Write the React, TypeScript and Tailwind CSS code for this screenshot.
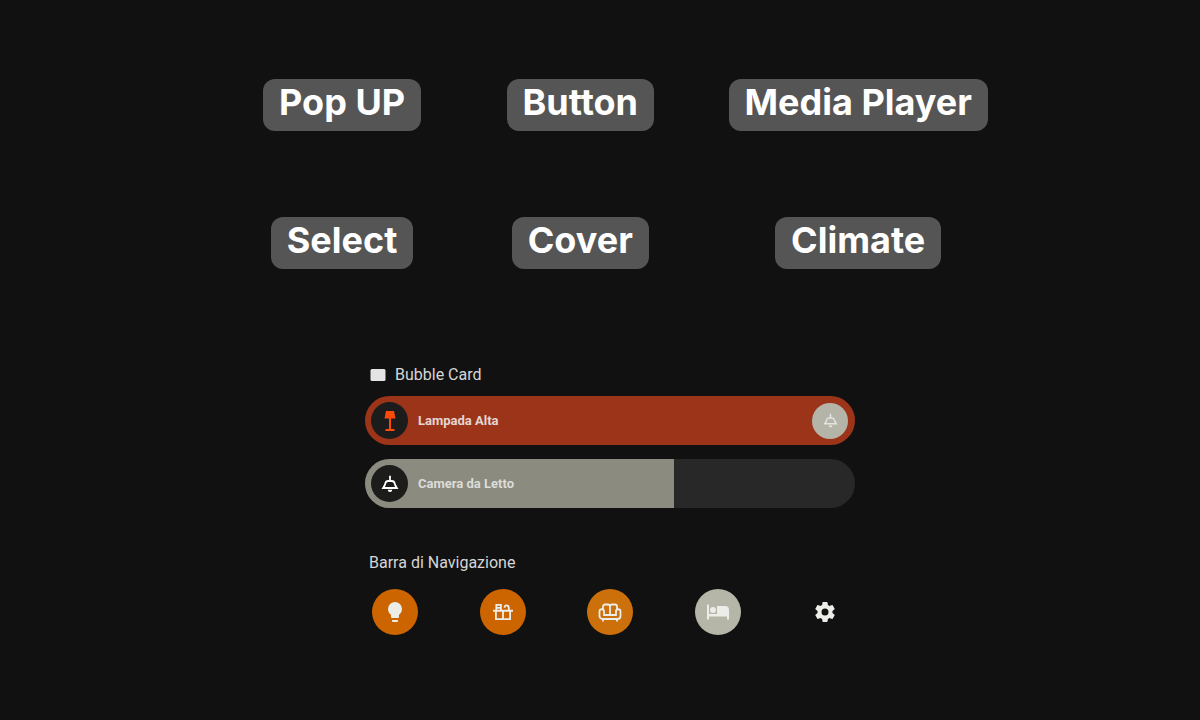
import React from 'react';

const ICONS = {
  card: 'M4 4h16a2 2 0 0 1 2 2v12a2 2 0 0 1-2 2H4a2 2 0 0 1-2-2V6a2 2 0 0 1 2-2z',
  floorLamp: 'M8 2h8l1.500 7.500H13V20h3.500v2h-9v-2H11V9.500H6.500z',
  lightbulb:
    'M12 2a7 7 0 0 0-7 7c0 2.380 1.190 4.470 3 5.740V17a1 1 0 0 0 1 1h6a1 1 0 0 0 1-1v-2.260c1.810-1.270 3-3.360 3-5.740a7 7 0 0 0-7-7M9 21a1 1 0 0 0 1 1h4a1 1 0 0 0 1-1v-1H9z',
  bed: 'M19 6h-8v8H3V4.500H1v15h2v-3h18v3h2V10a4 4 0 0 0-4-4M7 13a3 3 0 0 0 3-3 3 3 0 0 0-3-3 3 3 0 0 0-3 3 3 3 0 0 0 3 3',
  cog: 'M12 15.5A3.5 3.5 0 0 1 8.500 12 3.500 3.500 0 0 1 12 8.500a3.500 3.500 0 0 1 3.500 3.500 3.500 3.500 0 0 1-3.500 3.500m7.430-2.530c.04-.32.07-.64.07-.97s-.03-.66-.07-1l2.110-1.630c.19-.15.24-.42.12-.64l-2-3.460c-.12-.22-.39-.31-.61-.22l-2.490 1c-.52-.39-1.060-.73-1.690-.98l-.37-2.650A.506.506 0 0 0 14 2h-4c-.25 0-.46.18-.5.42l-.37 2.650c-.63.25-1.170.59-1.690.98l-2.490-1c-.22-.09-.49 0-.61.22l-2 3.460c-.13.22-.07.49.12.64L4.570 11c-.04.34-.07.67-.07 1s.03.65.07.97l-2.110 1.660c-.19.15-.25.42-.12.64l2 3.460c.12.22.39.3.61.22l2.490-1.010c.52.4 1.060.74 1.690.99l.37 2.650c.04.24.25.42.5.42h4c.25 0 .46-.18.5-.42l.37-2.650c.63-.26 1.170-.59 1.690-.99l2.490 1.010c.22.08.49 0 .61-.22l2-3.460c.12-.22.07-.49-.12-.64z',
};

const Icon: React.FC<{ name: keyof typeof ICONS; className?: string }> = ({ name, className }) => (
  <svg viewBox="0 0 24 24" fill="currentColor" fillRule="evenodd" className={className} aria-hidden="true">
    <path d={ICONS[name]} />
  </svg>
);

const CeilingLightIcon: React.FC<{ className?: string }> = ({ className }) => (
  <svg viewBox="0 0 24 24" fill="none" stroke="currentColor" strokeWidth="2.4" className={className} aria-hidden="true">
    <path d="M12 1v7M9.500 8h5a4 4 0 0 1 3.700 3l1 3 2 3.300H2.800l2-3.300 1-3a4 4 0 0 1 3.700-3z" />
    <path d="M9 19.800h6a3 3 0 0 1-6 0z" fill="currentColor" stroke="none" />
  </svg>
);

const CountertopIcon: React.FC<{ className?: string }> = ({ className }) => (
  <svg viewBox="0 0 24 24" fill="none" stroke="currentColor" strokeWidth="2.2" className={className} aria-hidden="true">
    <path d="M0 10.500h24M3.500 10.500v10h17v-10M12 10.500v10M4 10V3.500h5.500V10M5 7h4M14 7V6a2 2 0 0 1 2-2h0a3 3 0 0 1 3 3v3.500" />
  </svg>
);

const SofaIcon: React.FC<{ className?: string }> = ({ className }) => (
  <svg viewBox="0 0 24 24" fill="none" stroke="currentColor" strokeWidth="1.800" className={className} aria-hidden="true">
    <path d="M5 9V6.500a2 2 0 0 1 2-2h3a2 2 0 0 1 2 2 2 2 0 0 1 2-2h3a2 2 0 0 1 2 2V9M12 6v9M6 15h12v-3.500a2.200 2.200 0 0 1 4.500 0V16a3 3 0 0 1-3 3h-15a3 3 0 0 1-3-3v-4.500a2.200 2.200 0 0 1 4.500 0zM5 19v2.500M19 19v2.500" />
  </svg>
);

const Home: React.FC = () => {
  return (
    <main className="min-h-screen bg-[#111111] pl-5 pt-[79px] pb-20 font-[Roboto,sans-serif]">
      {/* Card types */}
      <section className="pl-5">
        <div className="mx-auto grid max-w-[794px] grid-cols-[3fr_3fr_4fr] justify-items-center gap-y-[86px]">
          <TypeButton label="Pop UP" />
          <TypeButton label="Button" />
          <TypeButton label="Media Player" />
          <TypeButton label="Select" />
          <TypeButton label="Cover" />
          <TypeButton label="Climate" />
        </div>
      </section>

      <div className="mx-auto mt-[94px] max-w-[490px]">
        {/* Lights */}
        <section>
          <h2 className="flex items-center gap-2 pl-1 text-base leading-6 text-[#d6d6d6]">
            <Icon name="card" className="size-[18px] text-[#e4e4e4]" />
            Bubble Card
          </h2>
          <div className="mt-[9px] flex h-[49px] items-center rounded-full bg-[#9c341a] pr-[7px] pl-[6px]">
            <button aria-label="Lampada Alta" className="flex size-[37px] items-center justify-center rounded-full bg-[#1c1c1c]">
              <Icon name="floorLamp" className="size-6 text-[#fc4a08]" />
            </button>
            <span className="ml-[10px] flex-1 text-[13px] font-bold text-[#e4d6d2]">Lampada Alta</span>
            <button aria-label="Camera da Letto" className="flex size-9 items-center justify-center rounded-full bg-[#b4b4a8] text-[#e4e4e0]">
              <CeilingLightIcon className="size-[15px]" />
            </button>
          </div>
          <div className="mt-[14px] overflow-hidden rounded-full bg-[#282828]">
            <div className="flex h-[49px] w-[63%] items-center bg-[#8b8b80] px-[6px]">
              <button aria-label="Camera da Letto" className="flex size-[37px] items-center justify-center rounded-full bg-[#1c1c1a] text-white">
                <CeilingLightIcon className="size-[18px]" />
              </button>
              <span className="ml-[10px] text-[13px] font-bold text-[#dcdcd8]">Camera da Letto</span>
            </div>
          </div>
        </section>

        {/* Navigation */}
        <section className="mt-[43px]">
          <h2 className="pl-1 text-base leading-6 text-[#d6d6d6]">Barra di Navigazione</h2>
          <nav className="mt-[14px] flex justify-between px-[7px] text-[#ecece8]">
            <NavButton label="Luci" className="bg-[#cc6400]">
              <Icon name="lightbulb" className="size-6" />
            </NavButton>
            <NavButton label="Cucina" className="bg-[#cc6400]">
              <CountertopIcon className="size-5" />
            </NavButton>
            <NavButton label="Soggiorno" className="bg-[#cc700c]">
              <SofaIcon className="size-6" />
            </NavButton>
            <NavButton label="Camera" className="bg-[#b6b6a8]">
              <Icon name="bed" className="size-6" />
            </NavButton>
            <NavButton label="Impostazioni">
              <Icon name="cog" className="size-6" />
            </NavButton>
          </nav>
        </section>
      </div>
    </main>
  );
};

const TypeButton: React.FC<{ label: string }> = ({ label }) => {
  return (
    <button className="rounded-xl bg-[#555555] px-4 pt-[3px] pb-[9px] font-[Inter,sans-serif] text-4xl leading-10 font-bold text-white">
      {label}
    </button>
  );
};

const NavButton: React.FC<{ label: string; className?: string; children: React.ReactNode }> = ({ label, className = '', children }) => {
  return (
    <button aria-label={label} className={`flex size-[46px] items-center justify-center rounded-full ${className}`}>
      {children}
    </button>
  );
};

export default Home;
